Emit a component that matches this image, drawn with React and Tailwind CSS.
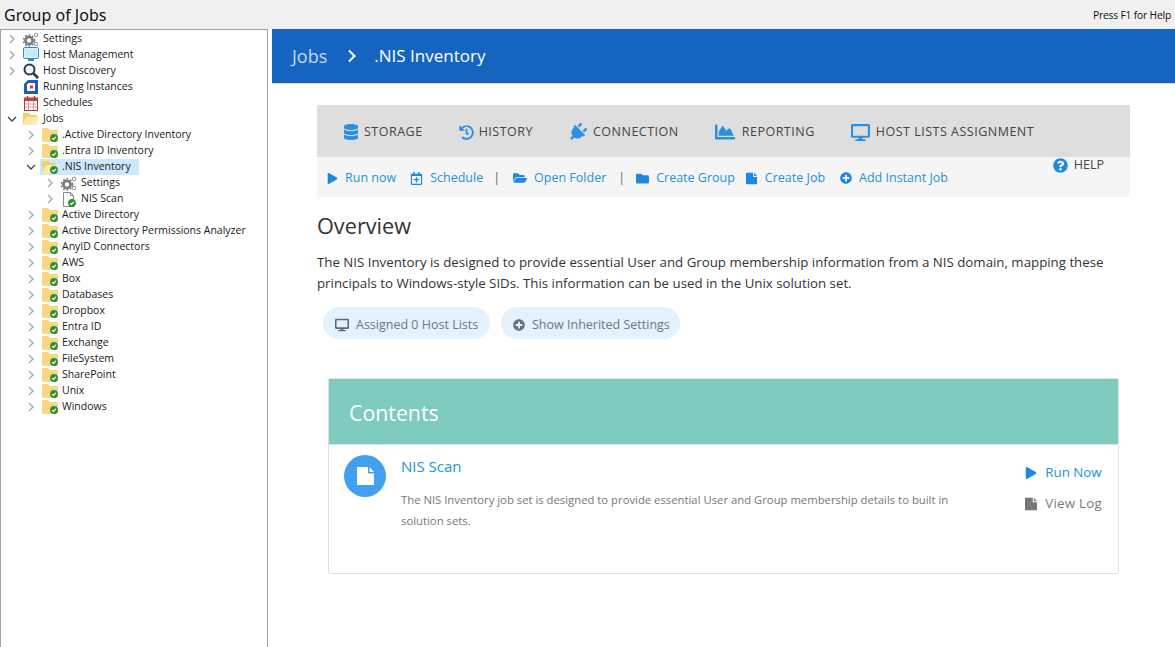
import React from 'react';
import {
  FaDatabase, FaHistory, FaPlug, FaChartArea, FaDesktop, FaPlay, FaRegCalendarPlus,
  FaFolderOpen, FaFolder, FaPlusCircle, FaQuestionCircle,
} from 'react-icons/fa';

const Chevron = ({ open }) => (
  <svg width="10" height="10" viewBox="0 0 10 10" fill="none" stroke={open ? '#444' : '#a3a3a3'} strokeWidth="1.3">
    {open ? <path d="M1 3l4 4 4-4" /> : <path d="M3 1l4 4-4 4" />}
  </svg>
);

const Check = () => (
  <svg className="absolute right-0 bottom-0" width="8" height="8" viewBox="0 0 9 9">
    <circle cx="4.5" cy="4.5" r="4.4" fill="#2f8f3a" />
    <path d="M2.3 4.6l1.6 1.5 2.8-2.8" stroke="#fff" strokeWidth="1.3" fill="none" />
  </svg>
);

const FolderCheck = () => (
  <span className="relative block w-[16px] h-[14px]">
    <svg width="16" height="14" viewBox="0 0 16 14">
      <path d="M0 1.5Q0 0 1.5 0H6l2 2h6.5Q16 2 16 3.5V14H1Q0 14 0 13z" fill="#f5d77f" />
    </svg>
    <Check />
  </span>
);

const FolderOpenCheck = () => (
  <span className="relative block w-[16px] h-[14px]">
    <svg width="16" height="14" viewBox="0 0 16 14">
      <path d="M0 1h6l2 2h6v2H4L0 12z" fill="#f2cf6c" />
      <path d="M4 5h12l-3 9H0z" fill="#fbe9ae" />
    </svg>
    <Check />
  </span>
);

const FolderOpenPlain = () => (
  <svg width="16" height="14" viewBox="0 0 16 14">
    <path d="M0 1h6l2 2h6v2H4L0 12z" fill="#f2cf6c" />
    <path d="M4 5h12l-3 8H0z" fill="#fbe9ae" />
  </svg>
);

const FileCheck = () => (
  <span className="relative block w-[14px] h-[15px]">
    <svg width="14" height="15" viewBox="0 0 14 15">
      <path d="M1.5.5h7l3 3v11h-10z" fill="#fff" stroke="#8a8a8a" />
      <path d="M8.5.5v3h3" fill="none" stroke="#8a8a8a" />
    </svg>
    <Check />
  </span>
);

const Gears = () => (
  <svg width="16" height="15" viewBox="0 0 16 15">
    <circle cx="6" cy="8.5" r="3.6" fill="none" stroke="#77797c" strokeWidth="2.6" />
    <circle cx="6" cy="8.5" r="5.6" fill="none" stroke="#77797c" strokeWidth="1.4" strokeDasharray="1.8 1.8" />
    <circle cx="13" cy="3" r="1.8" fill="none" stroke="#8e9092" strokeWidth="1" />
    <circle cx="13" cy="12" r="1.8" fill="none" stroke="#8e9092" strokeWidth="1" />
  </svg>
);

const Monitor = () => (
  <svg width="16" height="16" viewBox="0 0 16 16">
    <rect x="0.5" y="0.5" width="15" height="11" rx="1.5" fill="#fff" stroke="#2a8fd0" />
    <rect x="1.5" y="1.5" width="13" height="9" fill="#c9e8f8" />
    <rect x="5" y="12" width="6" height="2" fill="#2a8fd0" />
  </svg>
);

const Magnifier = () => (
  <svg width="16" height="16" viewBox="0 0 16 16">
    <circle cx="6.5" cy="6.5" r="5" fill="#eef5fb" stroke="#1f3a52" strokeWidth="2" />
    <path d="M10.5 10.5l4.5 4.5" stroke="#1f3a52" strokeWidth="2.6" />
  </svg>
);

const Running = () => (
  <svg width="14" height="14" viewBox="0 0 14 14">
    <path d="M4 0h10v14H0V4h3v7h8V3H4z" fill="#1c5fb8" />
    <path d="M0 4l4-4v4z" fill="#1c5fb8" />
    <rect x="6" y="5.5" width="3" height="3" fill="#d8353a" />
  </svg>
);

const Calendar = () => (
  <svg width="14" height="15" viewBox="0 0 14 15">
    <rect x="0.5" y="2" width="13" height="12.5" fill="#fff" stroke="#b5342e" />
    <rect x="0.5" y="2" width="13" height="3" fill="#c9413a" />
    <path d="M3.5 0v3M10.5 0v3" stroke="#b5342e" strokeWidth="1.4" />
    <path d="M.5 8h13M.5 11h13M4.5 5v9M9.5 5v9" stroke="#d8837e" strokeWidth="0.8" />
  </svg>
);

// page icon with the folded corner cut off, used in three sizes
const PageIcon = ({ className }) => (
  <svg className={className} viewBox="0 0 17 18" fill="currentColor">
    <path d="M0 0h11v6.5h6V18H0z" />
    <path d="M12.5 0L17 5h-4.5z" />
  </svg>
);

// one entry per row of the left tree
const tree = [
  { level: 0, arrow: 'closed', icon: <Gears />, label: 'Settings' },
  { level: 0, arrow: 'closed', icon: <Monitor />, label: 'Host Management' },
  { level: 0, arrow: 'closed', icon: <Magnifier />, label: 'Host Discovery' },
  { level: 0, icon: <Running />, label: 'Running Instances' },
  { level: 0, icon: <Calendar />, label: 'Schedules' },
  { level: 0, arrow: 'open', icon: <FolderOpenPlain />, label: 'Jobs' },
  { level: 1, arrow: 'closed', icon: <FolderCheck />, label: '.Active Directory Inventory' },
  { level: 1, arrow: 'closed', icon: <FolderCheck />, label: '.Entra ID Inventory' },
  { level: 1, arrow: 'open', icon: <FolderOpenCheck />, label: '.NIS Inventory', selected: true },
  { level: 2, arrow: 'closed', icon: <Gears />, label: 'Settings' },
  { level: 2, arrow: 'closed', icon: <FileCheck />, label: 'NIS Scan' },
  ...['Active Directory', 'Active Directory Permissions Analyzer', 'AnyID Connectors', 'AWS', 'Box', 'Databases',
    'Dropbox', 'Entra ID', 'Exchange', 'FileSystem', 'SharePoint', 'Unix', 'Windows'].map((label) => ({
    level: 1, arrow: 'closed', icon: <FolderCheck />, label,
  })),
];

const indent = ['pl-[6px]', 'pl-[25px]', 'pl-[44px]'];

const TreeRow = ({ row }) => (
  <div className={`flex items-center h-[16px] ${indent[row.level]}`}>
    <span className="w-[10px] flex justify-center">
      {row.arrow && <Chevron open={row.arrow === 'open'} />}
    </span>
    <div className={`flex items-center h-[16px] ml-[4px] pr-[8px] pl-[2px] ${row.selected ? 'bg-[#cce8ff]' : ''}`}>
      <span className="w-[16px] flex justify-center shrink-0">{row.icon}</span>
      <span className="ml-[4px] whitespace-nowrap">{row.label}</span>
    </div>
  </div>
);

const tabs = [
  { icon: <FaDatabase className="text-[16px]" />, label: 'STORAGE', gap: 'gap-[5px]' },
  { icon: <FaHistory className="text-[15px]" />, label: 'HISTORY', gap: 'gap-[5px]' },
  { icon: <FaPlug className="text-[19px] -m-[1px] rotate-45" />, label: 'CONNECTION', gap: 'gap-[7px]' },
  { icon: <FaChartArea className="text-[20px]" />, label: 'REPORTING', gap: 'gap-[7px]' },
  { icon: <FaDesktop className="text-[19px]" />, label: 'HOST LISTS ASSIGNMENT', gap: 'gap-[6px]' },
];

const Action = ({ icon, w, ml, children }) => (
  <a className={`flex items-center gap-[7px] text-[#1f93d6] ${ml}`}>
    <span className={`flex justify-center text-[#1e88e5] ${w}`}>{icon}</span>
    <span className="whitespace-nowrap">{children}</span>
  </a>
);

const App = () => {
  return (
    <div className="w-[1175px] h-[647px] overflow-hidden flex flex-col bg-white font-['Open_Sans',sans-serif]">
      {/* title bar */}
      <div className="h-[29px] shrink-0 bg-[#f0f0f0] flex items-center justify-between pl-[4px] pr-[4px] text-[#111]">
        <span className="text-[16px] font-['Noto_Sans',sans-serif]">Group of Jobs</span>
        <span className="text-[10.3px] tracking-[-0.2px] pt-[3px]">Press F1 for Help</span>
      </div>

      <div className="flex flex-1 min-h-0">
        {/* tree */}
        <div className="w-[268px] shrink-0 border-t border-l border-r border-[#a0a0a0] pt-[1px] text-[10.5px] text-[#1a1a1a]">
          {tree.map((row, i) => (
            <TreeRow key={i} row={row} />
          ))}
        </div>

        <div className="flex-1 ml-[4px] min-w-0">
          {/* blue header */}
          <div className="h-[55px] bg-[#1565c0] flex items-center pl-[20px] text-[18px] text-white border-b border-[#d8d8d8]">
            <span className="text-[#c3d6ee]">Jobs</span>
            <svg className="ml-[20px] mr-[17px]" width="10" height="14" viewBox="0 0 10 14" fill="none" stroke="#fff" strokeWidth="2">
              <path d="M2 1.5L7.5 7 2 12.5" />
            </svg>
            <span className="text-[17px]">.NIS Inventory</span>
          </div>

          <div className="pl-[45px] pr-[45px] pt-[21px]">
            {/* toolbar */}
            <div className="h-[52px] bg-[#dedede] flex items-center pl-[26px] pt-[2px] gap-[36px] text-[12.5px] text-[#444] tracking-[0.5px]">
              {tabs.map((t) => (
                <div key={t.label} className={`flex items-center ${t.gap}`}>
                  <span className="text-[#2a90e4]">{t.icon}</span>
                  <span className="whitespace-nowrap">{t.label}</span>
                </div>
              ))}
            </div>
            <div className="relative h-[40px] bg-[#f5f5f5] flex items-center pl-[10px] pt-[2px] gap-[12px] text-[12.5px]">
              <Action w="w-[11px]" icon={<FaPlay className="text-[11px]" />}>Run now</Action>
              <Action w="w-[13px]" ml="ml-[2px]" icon={<FaRegCalendarPlus className="text-[13px]" />}>Schedule</Action>
              <span className="text-[#666] -ml-[2px]">|</span>
              <Action w="w-[15px]" icon={<FaFolderOpen className="text-[14px]" />}>Open Folder</Action>
              <span className="text-[#666]">|</span>
              <Action w="w-[13px]" ml="-ml-[1px]" icon={<FaFolder className="text-[13px]" />}>Create Group</Action>
              <Action w="w-[12px]" ml="-ml-[1px]" icon={<PageIcon className="w-[11px] h-[13px]" />}>Create Job</Action>
              <Action w="w-[12px]" ml="ml-[3px]" icon={<FaPlusCircle className="text-[12px]" />}>Add Instant Job</Action>
              <div className="absolute right-[26px] top-[-1px] flex items-center gap-[6px] text-[12.5px] text-[#444]">
                <FaQuestionCircle className="text-[15px] text-[#1e88e5]" />
                HELP
              </div>
            </div>

            <h2 className="mt-[14px] text-[21.7px] leading-[30px] text-[#333]">Overview</h2>
            <p className="mt-[11px] text-[13.27px] leading-[21px] text-[#333] w-[813px]">
              The NIS Inventory is designed to provide essential User and Group membership information from a NIS domain, mapping these principals to Windows-style SIDs. This information can be used in the Unix solution set.
            </p>

            <div className="flex gap-[11px] mt-[13px] ml-[6px] text-[12.5px] text-[#6f777d]">
              <div className="h-[32px] w-[167px] rounded-full bg-[#e3f2fd] flex items-center pl-[12px] pt-[4px] gap-[7px]">
                <FaDesktop className="text-[14px] text-[#5f6b73]" />
                Assigned 0 Host Lists
              </div>
              <div className="h-[32px] w-[179px] rounded-full bg-[#e3f2fd] flex items-center pl-[12px] pt-[4px] gap-[7px]">
                <FaPlusCircle className="text-[12px] text-[#5f7480]" />
                Show Inherited Settings
              </div>
            </div>

            {/* contents card */}
            <div className="mt-[39px] ml-[11px] w-[791px] h-[196px] border border-[#e0e0e0] rounded-[2px] flex flex-col">
              <div className="h-[66px] shrink-0 bg-[#80cbc0] flex items-center pl-[20px] pt-[2px] text-[21.3px] text-white border-b border-[#dedede]">
                Contents
              </div>
              <div className="flex pl-[15px] pr-[16px] pt-[10px]">
                <div className="w-[42px] h-[42px] shrink-0 rounded-full bg-[#42a0f0] flex items-center justify-center">
                  <PageIcon className="w-[17px] h-[18px] text-white" />
                </div>
                <div className="ml-[15px] w-[570px]">
                  <div className="text-[15px] leading-[22px] text-[#2196d3]">NIS Scan</div>
                  <p className="mt-[12px] text-[11.3px] leading-[21px] text-[#777]">
                    The NIS Inventory job set is designed to provide essential User and Group membership details to built in solution sets.
                  </p>
                </div>
                <div className="ml-auto pt-[8px] text-[13.3px] flex flex-col gap-[11px]">
                  <div className="flex items-center gap-[8px] text-[#2196d3]">
                    <FaPlay className="text-[12px] text-[#1e88e5]" />
                    Run Now
                  </div>
                  <div className="flex items-center gap-[8px] text-[#7a7a7a] tracking-[0.25px]">
                    <PageIcon className="w-[12px] h-[14px] text-[#777]" />
                    View Log
                  </div>
                </div>
              </div>
            </div>
          </div>
        </div>
      </div>
    </div>
  );
};

export default App;
